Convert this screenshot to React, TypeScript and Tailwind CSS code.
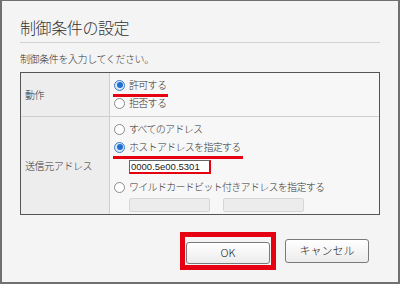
import React from 'react';

const JP = "font-['Noto_Sans_CJK_JP','Noto_Sans',sans-serif]";

// Windows-style radio button
const Radio = ({ checked }: { checked?: boolean }) =>
  checked ? (
    <span className="flex h-[11px] w-[11px] shrink-0 items-center justify-center rounded-full border border-[#3d7bc4] bg-[#dbe9f8]">
      <span className="h-[6px] w-[6px] rounded-full bg-[#1f6fd1]" />
    </span>
  ) : (
    <span className="h-[11px] w-[11px] shrink-0 rounded-full border border-[#8a8a8a] bg-white" />
  );

const Option = ({ label, checked, mark }: { label: string; checked?: boolean; mark?: boolean }) => (
  <div className="relative flex h-[18px] w-fit items-center gap-[4px]">
    <Radio checked={checked} />
    <span className="leading-none tracking-[-0.7px] text-[#333]">{label}</span>
    {mark && <span className="absolute -left-[1px] right-[-2px] bottom-[-3px] h-[3px] bg-[#e50012]" />}
  </div>
);

export default function App() {
  return (
    <div className={`${JP} flex h-[284px] w-[400px] flex-col border-t border-l-2 border-r-2 border-b-2 border-[#707070] bg-[#f4f4f4] pt-[14px] pl-[18px] pr-[18px] font-light text-[#333]`}>
      <h1 className="text-[16px] font-light leading-[24px] tracking-[-0.4px] text-[#333]">制御条件の設定</h1>
      <div className="mt-[3px] h-px shrink-0 bg-[#d2d2d2]" />
      <p className="mt-[8px] text-[10px] leading-[16px] tracking-[-0.4px]">制御条件を入力してください。</p>

      <div className="mt-[5px] flex shrink-0 flex-col border border-[#555] text-[10px]">
        {/* 動作 */}
        <div className="flex h-[43px]">
          <div className="flex w-[89px] items-center border-r border-[#cfcfcf] bg-[#ededed] pl-[4px] tracking-[-0.4px]">動作</div>
          <div className="flex flex-1 flex-col bg-[#f7f7f7] pt-[3px] pl-[4px]">
            <Option label="許可する" checked mark />
            <Option label="拒否する" />
          </div>
        </div>
        {/* 送信元アドレス */}
        <div className="flex h-[98px] border-t border-[#cfcfcf]">
          <div className="flex w-[89px] items-center border-r border-[#cfcfcf] bg-[#ededed] pl-[4px] tracking-[-0.4px]">送信元アドレス</div>
          <div className="flex flex-1 flex-col bg-[#f7f7f7] pt-[3px] pl-[4px]">
            <Option label="すべてのアドレス" />
            <Option label="ホストアドレスを指定する" checked mark />
            <div className="mt-[4px] ml-[15px] flex h-[14px] w-[82px] items-center border-t border-l border-r-2 border-b-2 border-[#666] border-r-[#e50012] border-b-[#e50012] bg-white pl-[1px] font-['Liberation_Sans',sans-serif] text-[9.5px] font-normal leading-none text-[#222]">
              0000.5e00.5301
            </div>
            <div className="mt-[4px]">
              <Option label="ワイルドカードビット付きアドレスを指定する" />
            </div>
            <div className="mt-[2px] ml-[15px] flex gap-[13px]">
              <div className="h-[14px] w-[81px] rounded-[2px] border border-[#d6d6d6] bg-[#ececec]" />
              <div className="h-[14px] w-[81px] rounded-[2px] border border-[#d6d6d6] bg-[#ececec]" />
            </div>
          </div>
        </div>
      </div>

      <div className="mt-[17px] flex shrink-0 items-center pl-[160px]">
        <div className="border-[5px] border-[#e50012] p-px">
          <button className="h-[22px] w-[84px] rounded-[3px] border border-[#7a7a7a] bg-gradient-to-b from-white to-[#ececec] text-[11px] font-light leading-none text-[#222]">
            OK
          </button>
        </div>
        <button className="ml-[9px] h-[24px] w-[84px] rounded-[3px] border border-[#7a7a7a] bg-gradient-to-b from-white to-[#ececec] text-[11px] font-light leading-none text-[#222]">
          キャンセル
        </button>
      </div>
    </div>
  );
}
